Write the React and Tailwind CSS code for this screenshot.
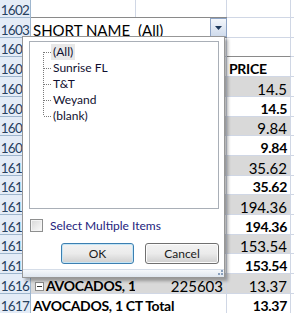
import React from 'react';

const rows = [
    { n: '1602', h: 'h-[18px]' },
    { n: '1603', h: 'h-[20px]', page: true },
    { n: '1604', h: 'h-[19px]' },
    { n: '1605', h: 'h-[20px]', c: 'PRICE', head: true },
    { n: '1606', h: 'h-[20px]', c: '14.5', gray: true },
    { n: '1607', h: 'h-[20px]', c: '14.5', bold: true },
    { n: '1608', h: 'h-[19px]', c: '9.84', gray: true },
    { n: '1609', h: 'h-[20px]', c: '9.84', bold: true },
    { n: '1610', h: 'h-[20px]', c: '35.62', gray: true },
    { n: '1611', h: 'h-[19px]', c: '35.62', bold: true },
    { n: '1612', h: 'h-[20px]', c: '194.36', gray: true },
    { n: '1613', h: 'h-[20px]', c: '194.36', bold: true },
    { n: '1614', h: 'h-[19px]', c: '153.54', gray: true },
    { n: '1615', h: 'h-[20px]', c: '153.54', bold: true },
    { n: '1616', h: 'h-[20px]', a: 'AVOCADOS, 1', b: '225603', c: '13.37', gray: true, group: true },
    { n: '1617', h: 'h-[20px]', a: 'AVOCADOS, 1 CT Total', c: '13.37', bold: true, total: true },
];

const items = ['(All)', 'Sunrise FL', 'T&T', 'Weyand', '(blank)'];

const boldText = 'font-bold text-[14px] tracking-[-0.3px]';

const RowHead = ({ n }) => (
    <div className="w-[31px] shrink-0 flex items-end justify-center leading-[14px] bg-[#e4ecf7] border-r border-b border-[#9eb6ce] text-[#27415f] text-[13.5px] tracking-[-0.7px]">
        {n}
    </div>
);

const Row = ({ r }) => {
    const bg = r.gray ? 'bg-[#d9d9d9]' : 'bg-white';
    const weight = r.bold || r.head ? boldText : 'font-normal';

    if (r.page) {
        return (
            <div className={`flex ${r.h}`}>
                <RowHead n={r.n} />
                <div className="w-[196px] shrink-0 flex border-t border-b border-[#8a8a8a] -mt-px h-[21px]">
                    <div className="w-[105px] flex items-end leading-[14px] pl-[2px]">SHORT NAME</div>
                    <div className="flex-1 flex items-end justify-between pl-[2px]">
                        <span className="leading-[14px]">(All)</span>
                        <div className="w-[17px] h-[19px] border border-[#8ea4c6] bg-gradient-to-b from-[#f4f7fb] to-[#cfdbec] flex items-center justify-center">
                            <svg width="7" height="4" viewBox="0 0 7 4"><path d="M0 0h7L3.5 4z" fill="#1e395b" /></svg>
                        </div>
                    </div>
                </div>
                <div className="w-[64px] shrink-0 border-r border-b border-[#d0d7e5]" />
                <div className="flex-1 border-b border-[#d0d7e5]" />
            </div>
        );
    }

    return (
        <div className={`flex ${r.h}`}>
            <RowHead n={r.n} />
            <div className={`w-[105px] shrink-0 flex items-end leading-[14px] pl-[2px] border-b border-[#d0d7e5] ${bg} ${r.total ? 'overflow-visible relative z-10' : 'overflow-hidden border-r'} ${weight}`}>
                {r.group && (
                    <span className="w-[9px] h-[9px] mb-[2px] mr-[2px] ml-[2px] border border-[#8d8d8d] bg-white flex items-center justify-center shrink-0">
                        <span className="w-[5px] h-px bg-[#333]" />
                    </span>
                )}
                {r.a && <span className={`whitespace-nowrap ${r.group ? boldText : ''}`}>{r.a}</span>}
            </div>
            <div className={`w-[91px] shrink-0 flex items-end leading-[14px] justify-end pr-[3px] border-r border-b border-[#d0d7e5] ${bg}`}>
                {r.b}
            </div>
            <div className={`w-[64px] shrink-0 flex items-end leading-[14px] pr-[3px] border-r border-b border-[#d0d7e5] ${bg} ${weight} ${r.head ? 'justify-start pl-[2px] border-t border-t-[#8a8a8a] -mt-px' : 'justify-end'}`}>
                {r.c}
            </div>
            <div className="flex-1 border-b border-[#d0d7e5]" />
        </div>
    );
};

const Popup = () => (
    <div className="absolute left-[22px] top-[36px] w-[203px] h-[242px] border border-[#979797] bg-white shadow-[3px_3px_3px_rgba(0,0,0,0.3)] flex flex-col font-['Lato',sans-serif] text-[12px]">
        <div className="ml-[6px] mt-[4px] w-[190px] h-[168px] border border-[#a9afb7] bg-white relative">
            <svg className="absolute left-0 top-0" width="24" height="84">
                <path d="M13.5 10V74" stroke="#7a7a7a" strokeDasharray="1 1" />
                <path d="M14 10.5H21M14 26.5H21M14 42.5H21M14 58.5H21M14 74.5H21" stroke="#7a7a7a" strokeDasharray="1 1" />
            </svg>
            <div className="pl-[21px] pt-[2px]">
                {items.map((t, i) => (
                    <div key={t} className="h-[16px] flex items-center">
                        <span className={`px-[2px] h-[16px] leading-[16px] text-[#101030] ${i === 0 ? 'bg-[#e8e8e8]' : ''}`}>{t}</span>
                    </div>
                ))}
            </div>
        </div>
        <div className="flex items-center ml-[7px] mt-[10px] h-[13px]">
            <span className="w-[13px] h-[13px] border border-[#8e8f8f] bg-gradient-to-br from-[#d8d8d8] to-[#fbfbfb] shadow-[inset_0_0_0_1px_#f4f4f4]" />
            <span className="ml-[7px] text-[#23237d]">Select Multiple Items</span>
        </div>
        <div className="flex justify-end gap-[11px] mt-[11px] mr-[5px]">
            <button className="w-[73px] h-[21px] rounded-[3px] border border-[#3c7fb1] bg-gradient-to-b from-[#f2f2f2] via-[#ebebeb] to-[#cfcfcf] shadow-[inset_0_0_0_1px_#c4e5f6] text-[#1a1a1a] leading-none">OK</button>
            <button className="w-[74px] h-[21px] rounded-[3px] border border-[#707070] bg-gradient-to-b from-[#f2f2f2] via-[#ebebeb] to-[#cfcfcf] shadow-[inset_0_0_0_1px_#fcfcfc] text-[#1a1a1a] leading-none">Cancel</button>
        </div>
        <div className="mt-auto h-[8px] border-t border-[#d5dde8] bg-gradient-to-b from-[#f5f8fb] to-[#dfe6ef] relative">
            <svg className="absolute right-[1px] bottom-[1px]" width="7" height="7">
                <rect x="5" y="1" width="2" height="2" fill="#8aa0bc" />
                <rect x="2" y="4" width="2" height="2" fill="#8aa0bc" />
                <rect x="5" y="4" width="2" height="2" fill="#8aa0bc" />
            </svg>
        </div>
    </div>
);

export default function App() {
    return (
        <div className="relative w-[294px] h-[313px] overflow-hidden bg-white font-['Lato',sans-serif] text-[15px] text-black">
            {rows.map(r => <Row key={r.n} r={r} />)}
            <Popup />
        </div>
    );
}
